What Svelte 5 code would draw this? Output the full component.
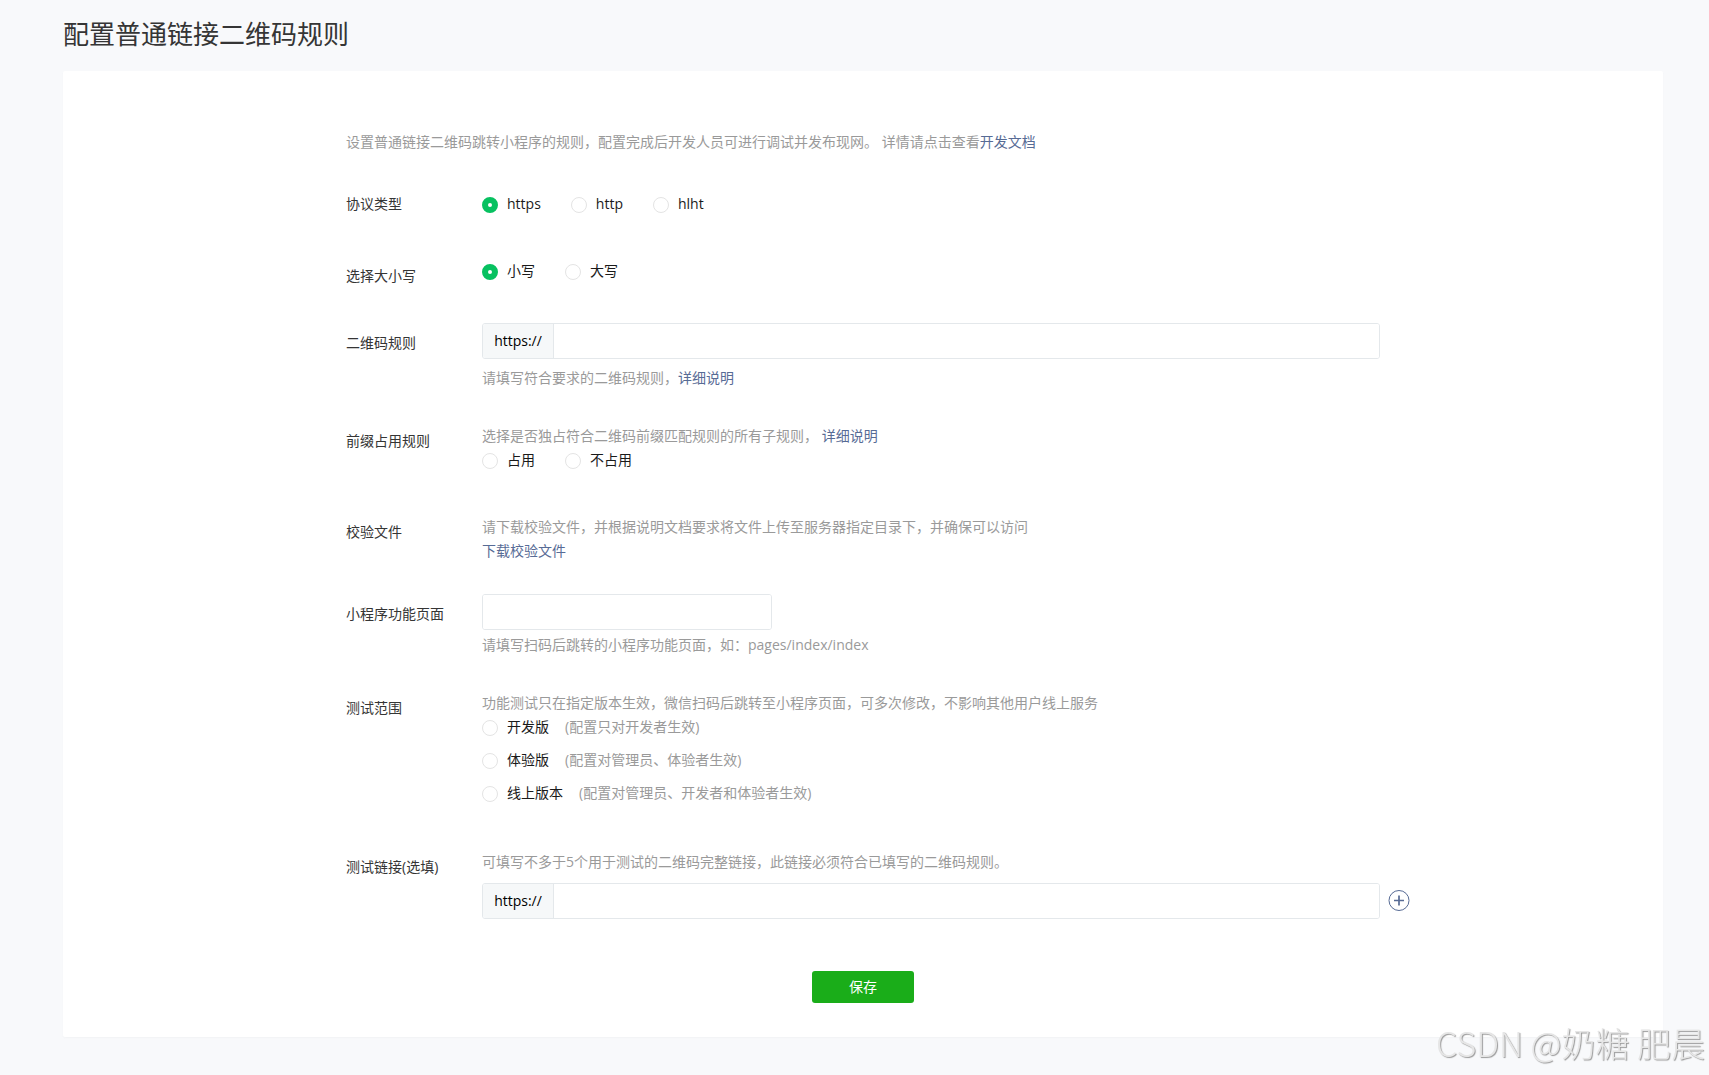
<script>
  let protocol = 'https';
  let letterCase = 'lower';
  let prefixRule = '';
  let testScope = '';
  let qrRule = '';
  let pagePath = '';
  let testLinks = [''];

  const protocols = ['https', 'http', 'hlht'];

  const letterCases = [
    { value: 'lower', text: '小写' },
    { value: 'upper', text: '大写' }
  ];

  const prefixRules = [
    { value: 'own', text: '占用' },
    { value: 'share', text: '不占用' }
  ];

  const scopes = [
    { value: 'dev', text: '开发版', note: '(配置只对开发者生效)' },
    { value: 'trial', text: '体验版', note: '(配置对管理员、体验者生效)' },
    { value: 'online', text: '线上版本', note: '(配置对管理员、开发者和体验者生效)' }
  ];

  function addLink() {
    if (testLinks.length < 5) {
      testLinks = [...testLinks, ''];
    }
  }
</script>

<div class="page">
  <h1>配置普通链接二维码规则</h1>

  <main class="panel">
    <form on:submit|preventDefault>
      <p class="intro">设置普通链接二维码跳转小程序的规则，配置完成后开发人员可进行调试并发布现网。 详情请点击查看<a href="#doc">开发文档</a></p>

      <div class="row">
        <div class="name flush" id="protocol-label">协议类型</div>
        <div class="field">
          <div class="radios" role="radiogroup" aria-labelledby="protocol-label">
            {#each protocols as item}
              <label class="radio"><input type="radio" name="protocol" value={item} bind:group={protocol} />{item}</label>
            {/each}
          </div>
        </div>
      </div>

      <div class="row">
        <div class="name" id="case-label">选择大小写</div>
        <div class="field">
          <div class="radios compact" role="radiogroup" aria-labelledby="case-label">
            {#each letterCases as item}
              <label class="radio"><input type="radio" name="case" value={item.value} bind:group={letterCase} />{item.text}</label>
            {/each}
          </div>
        </div>
      </div>

      <div class="row">
        <label class="name beside-box" for="qr-rule">二维码规则</label>
        <div class="field">
          <div class="box">
            <span class="prefix">{protocol}://</span>
            <input type="text" id="qr-rule" bind:value={qrRule} />
          </div>
          <p class="hint below">请填写符合要求的二维码规则，<a href="#rule">详细说明</a></p>
        </div>
      </div>

      <div class="row">
        <div class="name" id="prefix-label">前缀占用规则</div>
        <div class="field">
          <p class="hint">选择是否独占符合二维码前缀匹配规则的所有子规则， <a href="#prefix">详细说明</a></p>
          <div class="radios" role="radiogroup" aria-labelledby="prefix-label">
            {#each prefixRules as item}
              <label class="radio"><input type="radio" name="prefix" value={item.value} bind:group={prefixRule} />{item.text}</label>
            {/each}
          </div>
        </div>
      </div>

      <div class="row">
        <div class="name">校验文件</div>
        <div class="field">
          <p class="hint">请下载校验文件，并根据说明文档要求将文件上传至服务器指定目录下，并确保可以访问</p>
          <a class="download" href="#download">下载校验文件</a>
        </div>
      </div>

      <div class="row">
        <label class="name beside-box" for="page-path">小程序功能页面</label>
        <div class="field">
          <div class="box short">
            <input type="text" id="page-path" bind:value={pagePath} />
          </div>
          <p class="hint below near">请填写扫码后跳转的小程序功能页面，如：pages/index/index</p>
        </div>
      </div>

      <div class="row">
        <div class="name" id="scope-label">测试范围</div>
        <div class="field">
          <p class="hint">功能测试只在指定版本生效，微信扫码后跳转至小程序页面，可多次修改，不影响其他用户线上服务</p>
          <div class="radios stacked" role="radiogroup" aria-labelledby="scope-label">
            {#each scopes as item}
              <label class="radio">
                <input type="radio" name="scope" value={item.value} bind:group={testScope} />{item.text}<span class="note">{item.note}</span>
              </label>
            {/each}
          </div>
        </div>
      </div>

      <div class="row">
        <label class="name" for="test-link-0">测试链接(选填)</label>
        <div class="field">
          <p class="hint">可填写不多于5个用于测试的二维码完整链接，此链接必须符合已填写的二维码规则。</p>
          {#each testLinks as link, i}
            <div class="link-line">
              <div class="box">
                <span class="prefix">{protocol}://</span>
                <input type="text" id="test-link-{i}" bind:value={link} />
              </div>
              {#if i === testLinks.length - 1}
                <button type="button" class="add" aria-label="添加" on:click={addLink}>
                  <svg width="22" height="22" viewBox="0 0 22 22" fill="none" stroke="#576b95">
                    <circle cx="11" cy="10.5" r="10" />
                    <path d="M6 10.5h10M11 5.5v10" stroke-width="1.7" />
                  </svg>
                </button>
              {/if}
            </div>
          {/each}
        </div>
      </div>

      <button type="submit" class="save">保存</button>
    </form>
  </main>
</div>

<div class="watermark">CSDN @奶糖 肥晨</div>

<style>
  :global(body) {
    background: #f8f9fb;
  }

  .page {
    padding: 15px 46px 38px 63px;
    color: #353535;
    font-family: 'Open Sans', 'Noto Sans CJK SC', sans-serif;
    font-size: 14px;
    line-height: 22px;
  }

  h1 {
    margin: 0 0 18px;
    font-size: 26px;
    font-weight: 400;
    line-height: 38px;
  }

  p {
    margin: 0;
  }

  a {
    color: #576b95;
    text-decoration: none;
  }

  .panel {
    padding: 60px 24px 34px;
    background: #fff;
    border-radius: 2px;
    box-shadow: 0 1px 2px rgba(150, 150, 150, 0.06);
  }

  form {
    display: flex;
    flex-direction: column;
    gap: 32px;
    max-width: 1034px;
    margin: 0 auto;
  }

  .intro {
    margin-bottom: 8px;
    color: #9a9a9a;
  }

  .row {
    display: flex;
    align-items: flex-start;
  }

  .name {
    flex: none;
    width: 136px;
    padding-top: 5px;
  }

  .name.flush {
    padding-top: 0;
  }

  .name.beside-box {
    padding-top: 9px;
  }

  .field {
    flex: 1;
    min-width: 0;
  }

  .hint {
    margin-bottom: 2px;
    color: #9a9a9a;
  }

  .hint.below {
    margin: 8px 0 4px;
  }

  .hint.near {
    margin-top: 4px;
  }

  .download {
    display: block;
  }

  .radios {
    display: flex;
    gap: 30px;
    margin-bottom: 13px;
  }

  .radios.compact {
    margin-bottom: 9px;
  }

  .radios.stacked {
    flex-direction: column;
    gap: 11px;
    margin-bottom: 15px;
  }

  .radio {
    display: flex;
    align-items: center;
    color: #1a1a1a;
    cursor: pointer;
  }

  .radio input {
    appearance: none;
    width: 16px;
    height: 16px;
    margin: 2px 9px 0 0;
    box-sizing: border-box;
    border: 1px solid #e4e4e4;
    border-radius: 50%;
    background: #fff;
  }

  .radio input:checked {
    border: 6px solid #07c160;
  }

  .note {
    margin-left: 16px;
    color: #9a9a9a;
  }

  .box {
    display: flex;
    flex: none;
    width: 100%;
    height: 36px;
    box-sizing: border-box;
    border: 1px solid #e4e8eb;
    border-radius: 3px;
    overflow: hidden;
  }

  .box.short {
    width: 290px;
  }

  .box input {
    flex: 1;
    min-width: 0;
    padding: 0 10px;
    border: 0;
    outline: none;
    background: #fff;
    font: inherit;
    color: inherit;
  }

  .box:focus-within {
    border-color: #07c160;
  }

  .prefix {
    flex: none;
    width: 70px;
    border-right: 1px solid #e4e8eb;
    background: #f6f8f9;
    color: #000;
    line-height: 34px;
    text-align: center;
  }

  .link-line {
    display: flex;
    align-items: center;
    gap: 8px;
    margin-top: 10px;
  }

  .add {
    flex: none;
    padding: 0;
    border: 0;
    background: none;
    cursor: pointer;
  }

  .add svg {
    display: block;
  }

  .save {
    width: 102px;
    height: 32px;
    margin: 20px auto 0;
    padding: 0;
    border: 0;
    border-radius: 3px;
    background: #1aad19;
    color: #fff;
    font: inherit;
    cursor: pointer;
  }

  .watermark {
    position: fixed;
    right: 4px;
    bottom: 8px;
    color: #e6e6e6;
    font-family: 'Noto Sans CJK SC', sans-serif;
    font-size: 34px;
    font-weight: 300;
    line-height: 48px;
    text-shadow: 1px 1px 1px #999;
    white-space: nowrap;
    pointer-events: none;
  }
</style>
